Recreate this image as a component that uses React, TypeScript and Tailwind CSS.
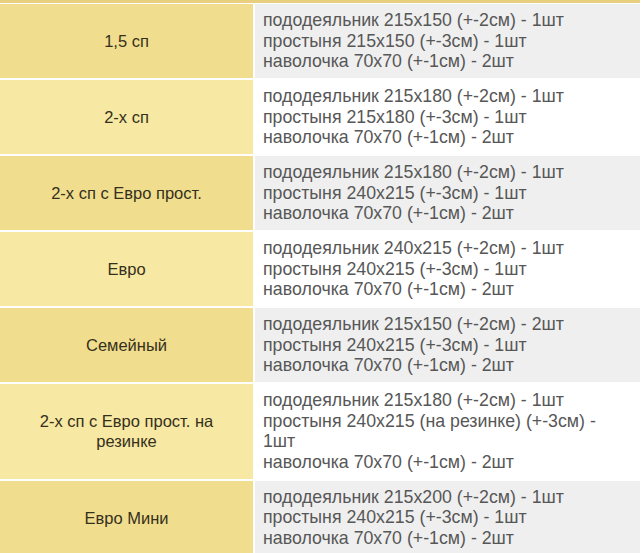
const rows = [
  {
    name: '1,5 сп',
    lines: ['пододеяльник 215х150 (+-2см) - 1шт', 'простыня 215х150 (+-3см) - 1шт', 'наволочка 70х70 (+-1см) - 2шт'],
  },
  {
    name: '2-х сп',
    lines: ['пододеяльник 215х180 (+-2см) - 1шт', 'простыня 215х180 (+-3см) - 1шт', 'наволочка 70х70 (+-1см) - 2шт'],
  },
  {
    name: '2-х сп с Евро прост.',
    lines: ['пододеяльник 215х180 (+-2см) - 1шт', 'простыня 240х215 (+-3см) - 1шт', 'наволочка 70х70 (+-1см) - 2шт'],
  },
  {
    name: 'Евро',
    lines: ['пододеяльник 240х215 (+-2см) - 1шт', 'простыня 240х215 (+-3см) - 1шт', 'наволочка 70х70 (+-1см) - 2шт'],
  },
  {
    name: 'Семейный',
    lines: ['пододеяльник 215х150 (+-2см) - 2шт', 'простыня 240х215 (+-3см) - 1шт', 'наволочка 70х70 (+-1см) - 2шт'],
  },
  {
    name: '2-х сп с Евро прост. на резинке',
    lines: ['пододеяльник 215х180 (+-2см) - 1шт', 'простыня 240х215 (на резинке) (+-3см) - 1шт', 'наволочка 70х70 (+-1см) - 2шт'],
  },
  {
    name: 'Евро Мини',
    lines: ['пододеяльник 215х200 (+-2см) - 1шт', 'простыня 240х215 (+-3см) - 1шт', 'наволочка 70х70 (+-1см) - 2шт'],
  },
];

export default function App() {
  return (
    <div className="w-[643px] h-[553px] overflow-hidden bg-white font-['Liberation_Sans',Arial,sans-serif]">
      <div className="w-[640px] h-[3px] bg-[#e8cf7e] mb-[1px]" />
      <div className="w-[640px] flex flex-col gap-[2px]">
        {rows.map((row, i) => (
          <div key={row.name} className="flex gap-[2px]">
            <div
              className={`w-[253px] shrink-0 flex items-center justify-center text-center px-6 text-[16.5px] leading-[20px] text-[#35301c] ${
                i % 2 === 0 ? 'bg-[#f1dd8e]' : 'bg-[#f7e8a3]'
              }`}
            >
              {row.name}
            </div>
            <div
              className={`flex-1 py-[6.25px] pl-[8px] pr-4 text-[17.75px] leading-[20.5px] text-[#575757] ${
                i % 2 === 0 ? 'bg-[#efefef]' : 'bg-white'
              }`}
            >
              {row.lines.map((l) => (
                <div key={l}>{l}</div>
              ))}
            </div>
          </div>
        ))}
      </div>
    </div>
  );
}
